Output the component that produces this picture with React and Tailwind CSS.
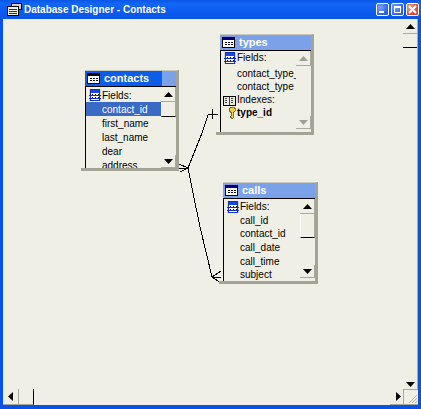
const font = "font-['Liberation_Sans',Arial,sans-serif]";

function TableIcon({ active }) {
  return (
    <svg width="13" height="11" viewBox="0 0 13 11" className="shrink-0" shapeRendering="crispEdges">
      <rect x="0.5" y="0.5" width="12" height="10" fill="#fff" stroke="#000" />
      <rect x="1" y="1" width="11" height="2" fill={active ? "#000" : "#000080"} />
      <path d="M3 5h2M6 5h2M9 5h2M3 7h2M6 7h2M9 7h2" stroke="#000" />
    </svg>
  );
}

function FieldsIcon() {
  return (
    <svg width="12" height="12" viewBox="0 0 12 12" className="shrink-0" shapeRendering="crispEdges">
      <rect x="0" y="0" width="12" height="12" fill="#d8d8e8" />
      <rect x="1.5" y="0.5" width="9" height="11" fill="#fff" stroke="#1030c0" />
      <rect x="2" y="1" width="8" height="3" fill="#1848e0" />
      <path d="M0 6h12M0 9h12" stroke="#1030c0" />
      <path d="M3 5h1M6 5h1M9 5h1M3 8h1M6 8h1M9 8h1" stroke="#000" />
    </svg>
  );
}

function BookIcon() {
  return (
    <svg width="14" height="12" viewBox="0 0 14 12" className="shrink-0" shapeRendering="crispEdges">
      <path d="M1 2h5l1 1 1-1h5v9H8l-1 1-1-1H1z" fill="#e8e8e0" stroke="#000" />
      <path d="M7 3v8M3 4h2M3 6h2M3 8h2M9 4h2M9 6h2M9 8h2" stroke="#444" />
    </svg>
  );
}

function KeyIcon() {
  return (
    <svg width="8" height="13" viewBox="0 0 8 13" className="shrink-0" shapeRendering="crispEdges">
      <path d="M2 1h4v1h1v3H6v1H5v6H3v-1H2v-1h1V6H2V5H1V2h1z" fill="#f0d040" stroke="#303000" strokeWidth="0.6" />
    </svg>
  );
}

function Arrow({ dir, faded }) {
  const c = faded ? "#a0a094" : "#000";
  const d = {
    up: "M0 5L4.5 0L9 5Z",
    down: "M0 0L9 0L4.5 5Z",
    left: "M5 0L5 9L0 4.5Z",
    right: "M0 0L0 9L5 4.5Z",
  }[dir];
  const h = dir === "up" || dir === "down";
  return (
    <svg width={h ? 9 : 5} height={h ? 5 : 9} viewBox={h ? "0 0 9 5" : "0 0 5 9"}>
      <path d={d} fill={c} />
    </svg>
  );
}

function MiniButton({ dir, faded, h }) {
  return (
    <div className={`flex items-center justify-center border-r border-b border-[#a8a89c] bg-[#f0efe6] shrink-0 ${h}`}>
      <Arrow dir={dir} faded={faded} />
    </div>
  );
}

function Row({ children, selected, bold, icon, h, extra }) {
  return (
    <div
      className={`flex items-center ${h} ${extra || ""} ${selected ? "bg-[#3a6ac5] text-white" : "text-black"} ${bold ? "font-bold" : ""} whitespace-nowrap`}
    >
      <div className="w-[16px] shrink-0 flex items-center justify-end pr-[1px]">{icon}</div>
      <span>{children}</span>
    </div>
  );
}

function DbTable({ pos, title, active, rows, scroll, rowH, pad }) {
  return (
    <div className={`absolute ${pos} flex flex-col border-t-[1px] border-r-[3px] border-b-[3px] border-t-[#c8c8bc] border-r-[#a3a396] border-b-[#a3a396] bg-[#f0efe6]`}>
      <div className="absolute left-[-4px] bottom-[-3px] w-[4px] h-[3px] bg-[#a3a396]" />
      <div
        className={`h-[16px] flex items-center shrink-0 border-b border-black ${active ? "bg-[#0c5ee8]" : "bg-[#7ba2e9]"} relative`}
      >
        <div className="w-[16px] flex justify-end pr-[1px]"><TableIcon active={active} /></div>
        <span className="ml-[3px] text-white font-bold text-[11px] leading-none">{title}</span>
        {active && <div className="absolute right-0 top-0 bottom-0 w-[14px] bg-[#7ba2e9]" />}
      </div>
      <div className="flex flex-1 min-h-0 border-l border-black overflow-hidden text-[10px]">
        <div className={`flex-1 min-w-0 overflow-hidden ${pad}`}>
          {rows.map((r) => (
            <Row key={r.t} selected={r.selected} bold={r.bold} icon={r.icon} h={rowH} extra={r.extra}>
              {r.t}
            </Row>
          ))}
        </div>
        <div className={`w-[15px] shrink-0 flex flex-col ${scroll.bottom || ""}`}>
          <MiniButton dir="up" faded={scroll.faded} h="h-[15px]" />
          {scroll.thumb && <div className={`${scroll.thumb} border-r border-b border-b-black border-r-[#a8a89c] border-l border-l-white`} />}
          <div className="flex-1" />
          <MiniButton dir="down" faded={scroll.faded} h="h-[13px]" />
        </div>
      </div>
    </div>
  );
}

function CaptionButton({ kind }) {
  const bg =
    kind === "close"
      ? "bg-[radial-gradient(circle_at_30%_30%,#f0a088,#d8482a_70%)]"
      : "bg-[radial-gradient(circle_at_30%_30%,#7aa4f8,#2a5ce0_75%)]";
  return (
    <div className={`w-[13px] h-[13px] rounded-[2px] border border-white ${bg} flex items-center justify-center`}>
      {kind === "min" && <div className="w-[5px] h-[2px] bg-white self-end mb-[2px] mr-[3px]" />}
      {kind === "max" && <div className="w-[7px] h-[7px] border border-white border-t-2" />}
      {kind === "close" && (
        <svg width="9" height="9" viewBox="0 0 9 9">
          <path d="M1 1L8 8M8 1L1 8" stroke="#fff" strokeWidth="2" />
        </svg>
      )}
    </div>
  );
}

export default function App() {
  return (
    <div className={`w-[421px] h-[409px] flex flex-col bg-[#0a52e4] overflow-hidden ${font}`}>
      <div className="h-[19px] shrink-0 flex items-center bg-[linear-gradient(180deg,#0a55e6_0%,#1266f6_20%,#0b5cf0_60%,#0a54e6_100%)] pl-[7px] pr-[2px]">
        <svg width="15" height="13" viewBox="0 0 15 13" className="shrink-0" shapeRendering="crispEdges">
          <rect x="4.5" y="0.5" width="10" height="6" fill="#d0d0d0" stroke="#000" />
          <rect x="0.5" y="3.5" width="11" height="9" fill="#f0f0e0" stroke="#000" />
          <path d="M2 6h8M2 8h8M2 10h8" stroke="#303030" />
        </svg>
        <span className="ml-[2px] text-white font-bold text-[10px] leading-none whitespace-nowrap">
          Database Designer - Contacts
        </span>
        <div className="ml-auto flex gap-[2px]">
          <CaptionButton kind="min" />
          <CaptionButton kind="max" />
          <CaptionButton kind="close" />
        </div>
      </div>
      <div className="flex-1 min-h-0 mx-[3px] flex flex-col bg-[#f0efe6]">
        <div className="flex-1 min-h-0 flex">
          <div className="flex-1 min-w-0 relative">
            <svg width="400" height="371" viewBox="3 19 400 371" className="absolute left-0 top-0" fill="none" stroke="#000" strokeWidth="1" shapeRendering="crispEdges">
              <path d="M218 114L208 115L202 133L188 168L192 188L200 227L212 277" />
              <path d="M212 109V119" />
              <path d="M179 164L188 168L180 172M179 168H188" />
              <path d="M221 271L212 277L221 283M212 277H221" />
            </svg>
            <DbTable
              pos="left-[82px] top-[51px] w-[94px] h-[101px]"
              title="contacts"
              active
              rowH="h-[14px]"
              pad="pt-[1px]"
              scroll={{ thumb: "h-[15px]" }}
              rows={[
                { t: "Fields:", icon: <FieldsIcon /> },
                { t: "contact_id", selected: true },
                { t: "first_name" },
                { t: "last_name" },
                { t: "dear" },
                { t: "address" },
              ]}
            />
            <DbTable
              pos="left-[217px] top-[15px] w-[94px] h-[101px]"
              title="types"
              rowH="h-[13px]"
              pad="pt-0"
              scroll={{ faded: true, bottom: "pb-[3px]" }}
              rows={[
                { t: "Fields:", icon: <FieldsIcon /> },
                { t: "contact_type_", extra: "mt-[3px]" },
                { t: "contact_type" },
                { t: "Indexes:", icon: <BookIcon /> },
                { t: "type_id", bold: true, icon: <KeyIcon /> },
              ]}
            />
            <DbTable
              pos="left-[220px] top-[163px] w-[95px] h-[102px]"
              title="calls"
              rowH="h-[13.6px]"
              pad="pt-[1px]"
              scroll={{ thumb: "h-[24px]", bottom: "pb-[3px]" }}
              rows={[
                { t: "Fields:", icon: <FieldsIcon /> },
                { t: "call_id" },
                { t: "contact_id" },
                { t: "call_date" },
                { t: "call_time" },
                { t: "subject" },
              ]}
            />
          </div>
          <div className="w-[15px] shrink-0 flex flex-col border-r border-[#a8a89c]">
            <div className="h-[15px] shrink-0 flex items-center justify-center border-b border-[#a8a89c]">
              <Arrow dir="up" />
            </div>
            <div className="h-[14px] shrink-0 border-b border-black" />
            <div className="flex-1" />
            <div className="h-[13px] shrink-0 flex items-center justify-center pt-[3px]">
              <Arrow dir="down" />
            </div>
          </div>
        </div>
        <div className="h-[16px] shrink-0 flex">
          <div className="w-[16px] shrink-0 flex items-center justify-center border-r border-b border-b-[#a8a89c] border-r-[#a8a89c]">
            <Arrow dir="left" />
          </div>
          <div className="w-[15px] shrink-0 border-r border-b border-r-black border-b-[#a8a89c]" />
          <div className="flex-1" />
          <div className="w-[13px] shrink-0 flex items-center justify-center pl-[3px] border-b border-[#a8a89c]">
            <Arrow dir="right" />
          </div>
          <div className="w-[15px] shrink-0 border-l border-t border-b border-[#a8a89c] flex items-end justify-end overflow-hidden">
            <svg width="12" height="12" viewBox="0 0 12 12" stroke="#b4b4a8">
              <path d="M11 3L3 11M11 6L6 11M11 9L9 11" />
            </svg>
          </div>
        </div>
      </div>
      <div className="h-[4px] shrink-0" />
    </div>
  );
}
